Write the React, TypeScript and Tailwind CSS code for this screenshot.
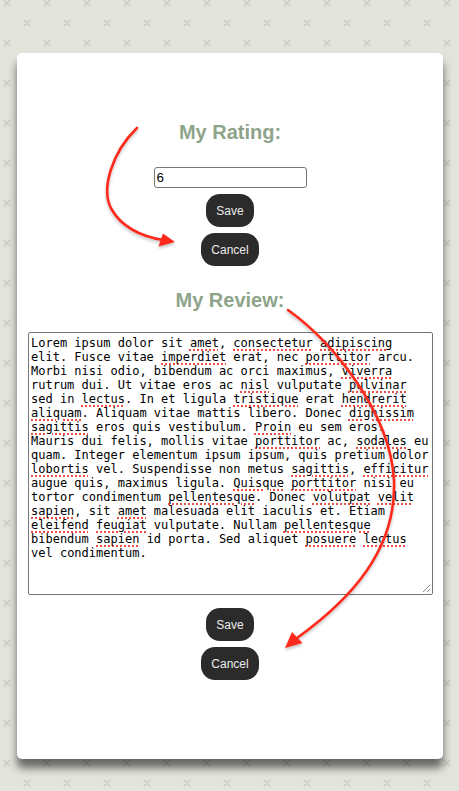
import React from 'react'

const reviewLines = [
  'Lorem ipsum dolor sit *amet, *consectetur *adipiscing',
  'elit. Fusce vitae *imperdiet erat, nec *porttitor arcu.',
  'Morbi nisi odio, bibendum ac orci maximus, *viverra',
  'rutrum dui. Ut vitae eros ac *nisl vulputate *pulvinar',
  'sed in *lectus. In et ligula *tristique erat *hendrerit',
  '*aliquam. Aliquam vitae mattis libero. Donec *dignissim',
  '*sagittis eros quis vestibulum. *Proin eu sem eros.',
  'Mauris dui felis, mollis vitae *porttitor ac, *sodales eu',
  'quam. Integer elementum ipsum ipsum, quis pretium dolor',
  '*lobortis vel. Suspendisse non metus *sagittis, *efficitur',
  'augue quis, maximus ligula. *Quisque *porttitor nisi eu',
  'tortor condimentum *pellentesque. Donec *volutpat *velit',
  '*sapien, sit *amet malesuada elit iaculis et. Etiam',
  '*eleifend *feugiat vulputate. Nullam *pellentesque',
  'bibendum *sapien id porta. Sed aliquet *posuere *lectus',
  'vel condimentum.',
]

function ReviewLine({ text }: { text: string }) {
  const tokens = text.split(' ')
  return (
    <div className="whitespace-pre h-[14px]">
      {tokens.map((tok, i) => {
        const sep = i < tokens.length - 1 ? ' ' : ''
        if (!tok.startsWith('*')) return <span key={i}>{tok + sep}</span>
        const word = tok.slice(1)
        const m = word.match(/^([A-Za-z]+)(.*)$/)
        const core = m ? m[1] : word
        const rest = m ? m[2] : ''
        return (
          <span key={i}>
            <span className="underline decoration-dotted decoration-[#ef4f46] decoration-2 underline-offset-[2px]">
              {core}
            </span>
            {rest + sep}
          </span>
        )
      })}
    </div>
  )
}

function DarkButton({ label }: { label: string }) {
  return (
    <button className="h-[33px] px-[10px] rounded-[14px] bg-[#2b2b2b] text-[#ececec] text-[12px] leading-none font-['Liberation_Sans',Arial,sans-serif]">
      {label}
    </button>
  )
}

function Heading({ children }: { children: React.ReactNode }) {
  return (
    <h2 className="text-[20px] leading-[23px] font-bold text-[#8ea48a] font-['Liberation_Sans',Arial,sans-serif]">
      {children}
    </h2>
  )
}

export default function App() {
  return (
    <div className="relative h-[791px] w-full overflow-hidden bg-[#e3e4dc]">
      <svg className="absolute inset-0 w-full h-full" aria-hidden>
        <defs>
          <pattern id="xs" width="40" height="40" patternUnits="userSpaceOnUse">
            <g stroke="#c8d0c4" strokeWidth="1.6" strokeLinecap="round">
              <path d="M4 0 L10 6 M10 0 L4 6" />
              <path d="M24 20 L30 26 M30 20 L24 26" />
              <path d="M4 40 L10 46 M10 40 L4 46" />
            </g>
          </pattern>
        </defs>
        <rect width="100%" height="100%" fill="url(#xs)" />
      </svg>

      <div className="relative pt-[53px] pl-[17px]">
        <div className="w-[426px] h-[706px] bg-white rounded-[5px] shadow-[0_9px_9px_rgba(0,0,0,0.55)] flex flex-col items-center pt-[68px]">
          <Heading>My Rating:</Heading>
          <input
            defaultValue="6"
            className="mt-[23px] w-[153px] h-[21px] border border-[#767676] rounded-[3px] px-[2px] text-[13.33px] text-black font-['Liberation_Sans',Arial,sans-serif] outline-none"
          />
          <div className="mt-[6px] flex flex-col items-center gap-[6px]">
            <DarkButton label="Save" />
            <DarkButton label="Cancel" />
          </div>

          <div className="mt-[23px]">
            <Heading>My Review:</Heading>
          </div>

          <div className="relative mt-[20px] ml-[1px] w-[405px] h-[263px] border border-[#767676] rounded-[2px] px-[2px] pt-[3px] text-[12px] leading-[14px] text-black font-['DejaVu_Sans_Mono',Menlo,monospace]">
            {reviewLines.map((l, i) => (
              <ReviewLine key={i} text={l} />
            ))}
            <svg className="absolute right-[1px] bottom-[1px]" width="9" height="9" viewBox="0 0 9 9">
              <path d="M8 1 L1 8 M8 5 L5 8" stroke="#8a8a8a" strokeWidth="1" />
            </svg>
          </div>

          <div className="mt-[13px] flex flex-col items-center gap-[6px]">
            <DarkButton label="Save" />
            <DarkButton label="Cancel" />
          </div>
        </div>
      </div>

      <svg className="absolute inset-0 w-full h-full pointer-events-none" aria-hidden>
        <defs>
          <filter id="sh" x="-20%" y="-20%" width="140%" height="140%">
            <feDropShadow dx="0" dy="2" stdDeviation="1.5" floodColor="#000" floodOpacity="0.25" />
          </filter>
        </defs>
        <g filter="url(#sh)" stroke="#fd2a1c" strokeWidth="2.6" fill="none" strokeLinecap="round">
          <path d="M137 128 C112 152 100 190 112 210 C124 230 145 237 163 240" />
          <path d="M288 310 C330 340 390 410 394 480 C397 550 350 600 297 638" />
        </g>
        <g filter="url(#sh)" fill="#fd2a1c">
          <polygon points="175,242 158.5,246.5 163,233.5" />
          <polygon points="285,648 292,632 302.5,643" />
        </g>
      </svg>
    </div>
  )
}
